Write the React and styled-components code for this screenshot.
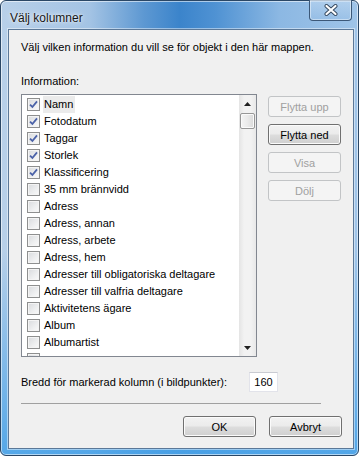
import React from "react";
import styled, { createGlobalStyle } from "styled-components";

const FONT = `"Liberation Sans", Arial, sans-serif`;

const GlobalStyle = createGlobalStyle`
  html, body {
    margin: 0;
    padding: 0;
    background: #ffffff;
  }
  body {
    font-family: ${FONT};
    font-size: 11px;
    color: #000;
  }
`;

// last entry is only peeking in at the bottom of the list
const columns = [
  { name: "Namn", checked: true, selected: true },
  { name: "Fotodatum", checked: true },
  { name: "Taggar", checked: true },
  { name: "Storlek", checked: true },
  { name: "Klassificering", checked: true },
  { name: "35 mm brännvidd" },
  { name: "Adress" },
  { name: "Adress, annan" },
  { name: "Adress, arbete" },
  { name: "Adress, hem" },
  { name: "Adresser till obligatoriska deltagare" },
  { name: "Adresser till valfria deltagare" },
  { name: "Aktivitetens ägare" },
  { name: "Album" },
  { name: "Albumartist" },
  { name: "", partial: true },
];

const Window = styled.div`
  box-sizing: border-box;
  width: 359px;
  height: 456px;
  border: 1px solid #2a4766;
  border-radius: 6px;
  padding: 0 4px 6px 7px;
  display: flex;
  flex-direction: column;
  box-shadow: inset 0 0 0 1px rgba(255, 255, 255, 0.55);
  background:
    linear-gradient(to bottom, rgba(74, 163, 232, 0) 55%, rgba(74, 163, 232, 0.9) 100%),
    linear-gradient(
      to right,
      #b8d0e9 0%,
      #a3c3e4 25%,
      #5d98d2 40%,
      #3b84cb 50%,
      #4f92d3 60%,
      #8cb8e3 78%,
      #9fc4e8 100%
    );
`;

const TitleBar = styled.div`
  height: 28px;
  display: flex;
  align-items: flex-start;
  justify-content: space-between;
`;

const Title = styled.span`
  margin: 10px 0 0 2px;
  font-size: 12px;
  line-height: 14px;
  color: #161616;
  text-shadow: 0 0 6px rgba(255, 255, 255, 0.9), 0 0 2px rgba(255, 255, 255, 0.8);
`;

const CloseButton = styled.div`
  box-sizing: border-box;
  width: 43px;
  height: 21px;
  margin: -1px 2px 0 0;
  border: 1px solid #3c5878;
  border-top: none;
  border-radius: 0 0 4px 4px;
  display: flex;
  align-items: center;
  justify-content: center;
  box-shadow: inset 0 0 0 1px rgba(255, 255, 255, 0.45);
  background: linear-gradient(to bottom, rgba(200, 222, 244, 0.5), rgba(150, 190, 230, 0.35));
`;

const Client = styled.div`
  flex: 1;
  box-sizing: border-box;
  border: 1px solid #5b7898;
  box-shadow: 0 0 0 1px rgba(255, 255, 255, 0.45);
  background: #f0f0f0;
  padding: 10px 11px 10px 12px;
  display: flex;
  flex-direction: column;
`;

const Text = styled.div`
  line-height: 15px;
  white-space: nowrap;
`;

const Label = styled(Text)`
  margin-top: 19px;
`;

const MainRow = styled.div`
  display: flex;
  gap: 11px;
  margin-top: 5px;
`;

const ListBox = styled.div`
  box-sizing: border-box;
  width: 236px;
  height: 263px;
  border: 1px solid #828790;
  background: #fff;
  display: flex;
  overflow: hidden;
`;

const Items = styled.div`
  flex: 1;
  padding-top: 1px;
  overflow: hidden;
`;

const Row = styled.div`
  height: 17px;
  display: flex;
  align-items: center;
  padding-left: 5px;
`;

const Box = styled.span`
  box-sizing: border-box;
  width: 13px;
  height: 13px;
  border: 1px solid #8e8f8f;
  background: linear-gradient(135deg, #d8dadd 0%, #eeeff0 60%, #fafafa 100%);
  box-shadow: inset 0 0 0 1px #f4f4f4;
  display: flex;
  align-items: center;
  justify-content: center;
  flex-shrink: 0;
`;

const RowText = styled.span`
  margin-left: 3px;
  padding: 0 2px 0 1px;
  line-height: 17px;
  white-space: nowrap;
  background: ${(p) => (p.$selected ? "#ebebeb" : "transparent")};
`;

const ScrollBar = styled.div`
  width: 17px;
  display: flex;
  flex-direction: column;
  background: linear-gradient(to right, #e4e4e4 0%, #f2f2f2 30%, #f2f2f2 70%, #e8e8e8 100%);
`;

const Arrow = styled.div`
  height: 17px;
  display: flex;
  align-items: center;
  justify-content: center;
`;

const Thumb = styled.div`
  box-sizing: border-box;
  height: 16px;
  margin: 1px 1px 0;
  border: 1px solid #979797;
  border-radius: 2px;
  background: linear-gradient(to right, #f4f4f4 0%, #eaeaea 50%, #d9d9d9 100%);
  box-shadow: inset 0 0 0 1px #fafafa;
`;

const Track = styled.div`
  flex: 1;
`;

const ButtonColumn = styled.div`
  display: flex;
  flex-direction: column;
  gap: 7px;
  margin-top: 2px;
`;

const Button = styled.button`
  box-sizing: border-box;
  width: 73px;
  height: 21px;
  padding: 0;
  font-family: ${FONT};
  font-size: 11px;
  border-radius: 3px;
  border: 1px solid ${(p) => (p.disabled ? "#c2c4c6" : "#707070")};
  color: ${(p) => (p.disabled ? "#a0a0a0" : "#000")};
  background: ${(p) =>
    p.disabled
      ? "#f4f4f4"
      : "linear-gradient(to bottom, #f2f2f2 0%, #ebebeb 48%, #dddddd 52%, #cfcfcf 100%)"};
  box-shadow: ${(p) => (p.disabled ? "none" : "inset 0 0 0 1px #fbfbfb")};
`;

const WidthRow = styled.div`
  display: flex;
  align-items: center;
  justify-content: space-between;
  width: 257px;
  margin-top: 15px;
`;

const NumberInput = styled.div`
  box-sizing: border-box;
  width: 29px;
  height: 20px;
  border: 1px solid #e2e3ea;
  border-top-color: #c9cbd2;
  background: #fff;
  text-align: center;
  line-height: 18px;
`;

const Separator = styled.div`
  width: 300px;
  height: 0;
  border-top: 1px solid #a0a0a0;
  margin-top: 11px;
`;

const Footer = styled.div`
  display: flex;
  justify-content: flex-end;
  gap: 13px;
  margin-top: 12px;
`;

const CheckMark = () => (
  <svg width="9" height="9" viewBox="0 0 9 9">
    <path d="M1 4.6 L3.4 7 L8 1.4" fill="none" stroke="#4b62a8" strokeWidth="1.8" />
  </svg>
);

const CloseGlyph = () => (
  <svg width="14" height="12" viewBox="0 0 14 12">
    <path d="M2.5 2 L11.5 10 M11.5 2 L2.5 10" stroke="#33465c" strokeWidth="4" strokeLinecap="round" />
    <path d="M2.5 2 L11.5 10 M11.5 2 L2.5 10" stroke="#ffffff" strokeWidth="2.2" strokeLinecap="round" />
  </svg>
);

const App = () => {
  return (
    <>
      <GlobalStyle />
      <Window>
        <TitleBar>
          <Title>Välj kolumner</Title>
          <CloseButton>
            <CloseGlyph />
          </CloseButton>
        </TitleBar>
        <Client>
          <Text>Välj vilken information du vill se för objekt i den här mappen.</Text>
          <Label>Information:</Label>
          <MainRow>
            <ListBox>
              <Items>
                {columns.map((c, i) => (
                  <Row key={i}>
                    <Box>{c.checked && <CheckMark />}</Box>
                    {!c.partial && <RowText $selected={c.selected}>{c.name}</RowText>}
                  </Row>
                ))}
              </Items>
              <ScrollBar>
                <Arrow>
                  <svg width="7" height="4" viewBox="0 0 7 4">
                    <path d="M3.5 0 L7 4 L0 4 Z" fill="#202020" />
                  </svg>
                </Arrow>
                <Thumb />
                <Track />
                <Arrow>
                  <svg width="7" height="4" viewBox="0 0 7 4">
                    <path d="M0 0 L7 0 L3.5 4 Z" fill="#202020" />
                  </svg>
                </Arrow>
              </ScrollBar>
            </ListBox>
            <ButtonColumn>
              <Button disabled>Flytta upp</Button>
              <Button>Flytta ned</Button>
              <Button disabled>Visa</Button>
              <Button disabled>Dölj</Button>
            </ButtonColumn>
          </MainRow>
          <WidthRow>
            <Text>Bredd för markerad kolumn (i bildpunkter):</Text>
            <NumberInput>160</NumberInput>
          </WidthRow>
          <Separator />
          <Footer>
            <Button>OK</Button>
            <Button>Avbryt</Button>
          </Footer>
        </Client>
      </Window>
    </>
  );
};

export default App;
